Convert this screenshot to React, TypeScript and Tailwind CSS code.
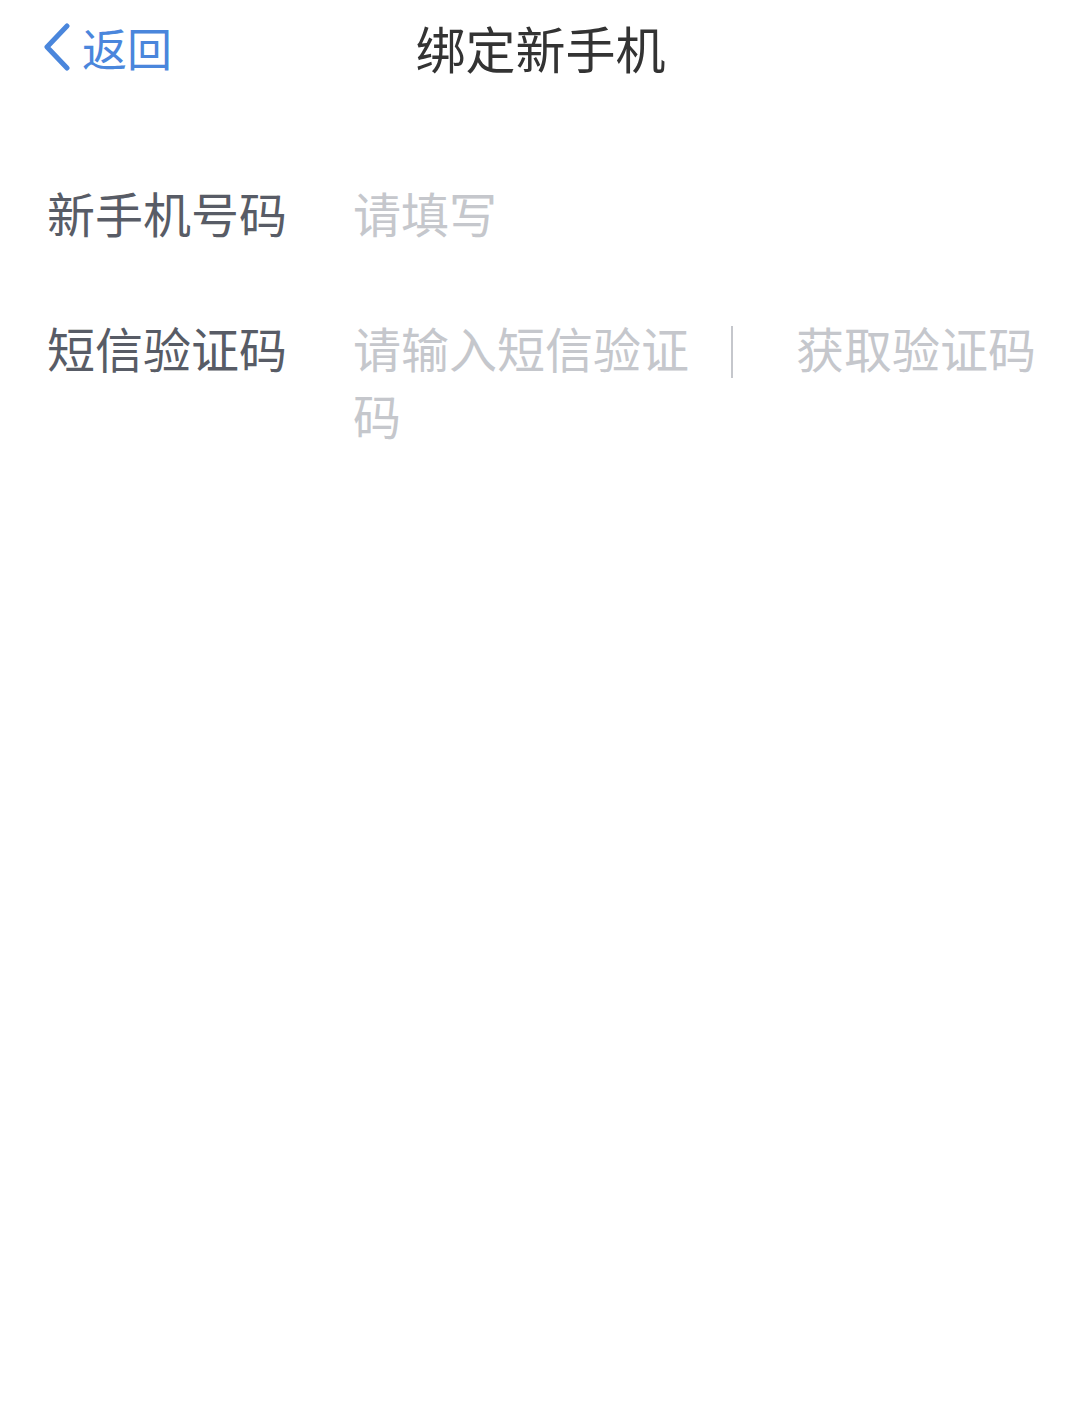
export default function App() {
  const font = { fontFamily: '"Noto Sans CJK SC", "Noto Sans", sans-serif' };
  return (
    <div className="min-h-[1415px] w-full bg-white" style={font}>
      <header className="relative flex h-[94px] items-center justify-center">
        <button
          type="button"
          className="absolute left-[42px] top-0 flex h-[94px] items-center gap-[10px] text-[#4a86dc]"
        >
          <svg width="30" height="48" viewBox="0 0 30 48" fill="none">
            <polyline
              points="25,3 5,24 25,45"
              stroke="currentColor"
              strokeWidth="5"
              strokeLinecap="round"
              strokeLinejoin="round"
            />
          </svg>
          <span className="text-[45px] leading-none">返回</span>
        </button>
        <h1 className="pl-[10px] text-[50px] leading-none font-normal text-[#333333]">绑定新手机</h1>
      </header>

      <div className="mt-[51px] flex flex-col pl-[47px]">
        <div className="flex items-start py-[34px] text-[48px] leading-[67px]">
          <span className="w-[306px] shrink-0 text-[#585c66]">新手机号码</span>
          <span className="text-[#c5c7cc]">请填写</span>
        </div>
        <div className="flex items-start pt-[34px] text-[48px] leading-[67px]">
          <span className="w-[306px] shrink-0 text-[#585c66]">短信验证码</span>
          <span className="w-[360px] shrink-0 text-[#c5c7cc]">请输入短信验证码</span>
          <span className="ml-[18px] mt-[12px] h-[52px] w-[2px] shrink-0 bg-[#c5c7cc]" />
          <button type="button" className="ml-[63px] text-[48px] leading-[67px] text-[#c5c7cc]">
            获取验证码
          </button>
        </div>
      </div>
    </div>
  );
}
